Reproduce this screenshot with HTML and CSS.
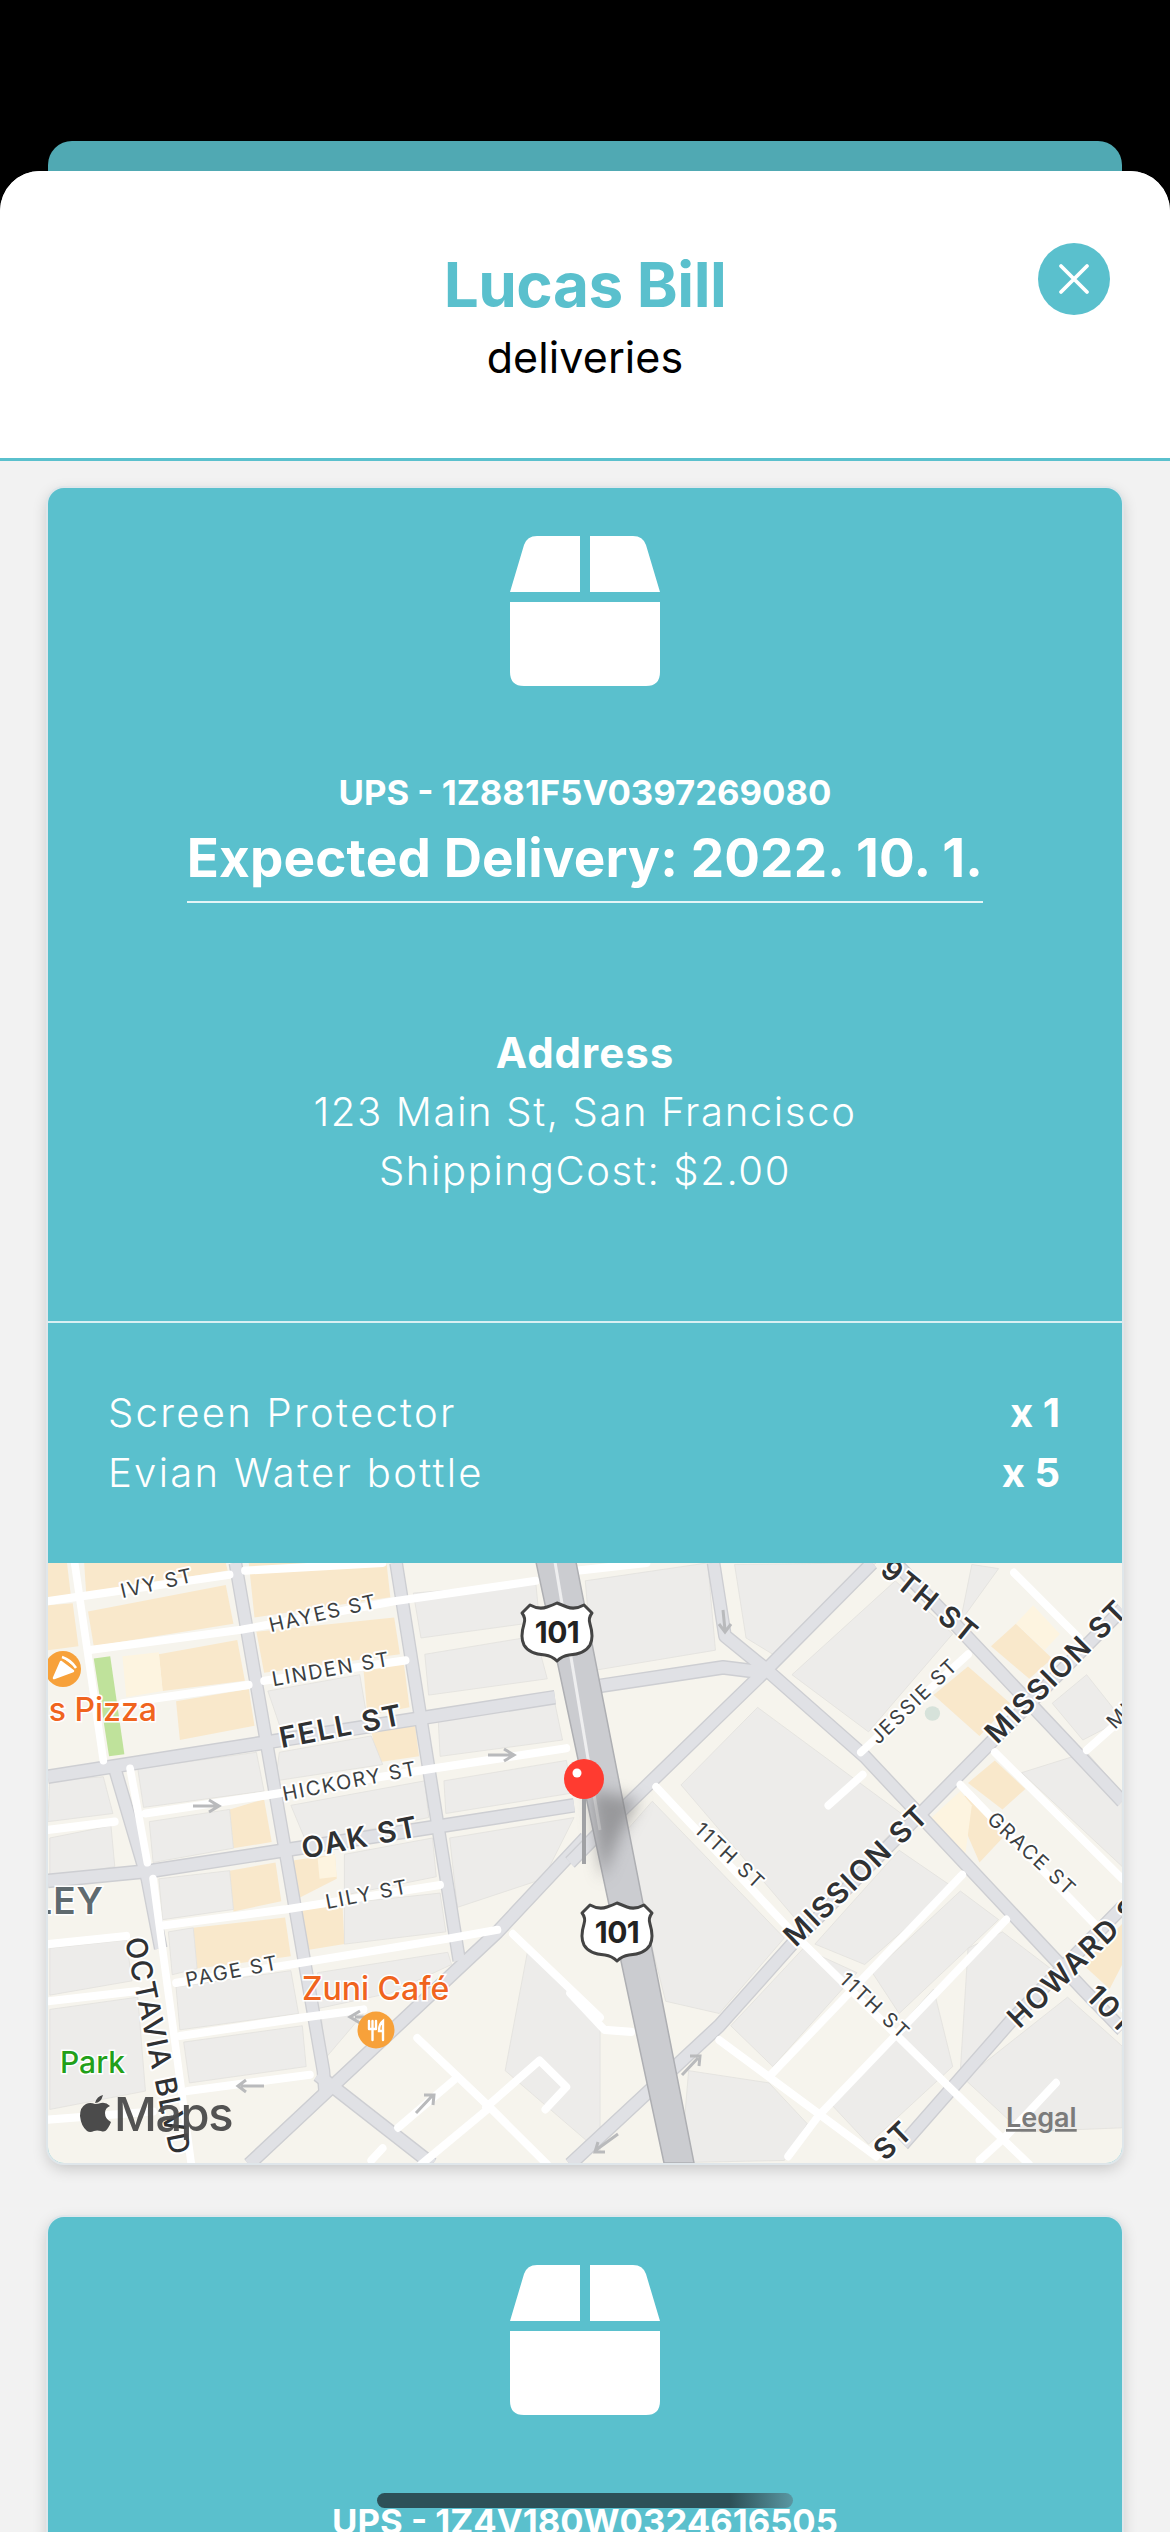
FILE: index.html
```html
<!DOCTYPE html>
<html lang="en">
<head>
<meta charset="utf-8">
<title>Lucas Bill deliveries</title>
<link rel="stylesheet" href="styles.css">
</head>
<body>
<div class="screen">
  <div class="backdrop"><div class="peek"></div></div>
  <main class="sheet">
    <header class="sheet-head">
      <h1 class="name">Lucas Bill</h1>
      <p class="sub">deliveries</p>
      <button class="close" aria-label="Close">
        <svg class="close-x" viewBox="0 0 36 36"><path d="M5 5 L31 31 M31 5 L5 31"/></svg>
      </button>
    </header>
    <div class="list">
      <article class="card">
        <section class="card-top">
          <svg class="box" viewBox="0 0 150 150"><path d="M0 56 L14 9 Q17 0 27 0 L70 0 L70 56 Z M80 0 L123 0 Q133 0 136 9 L150 56 L80 56 Z M0 66 H150 V136 Q150 150 136 150 H14 Q0 150 0 136 Z"/></svg>
          <p class="track">UPS - 1Z881F5V0397269080</p>
          <h2 class="expected">Expected Delivery: 2022. 10. 1.</h2>
          <p class="addr-title">Address</p>
          <p class="addr">123 Main St, San Francisco</p>
          <p class="addr">ShippingCost: $2.00</p>
        </section>
        <section class="items">
          <div class="item"><span>Screen Protector</span><b>x 1</b></div>
          <div class="item"><span>Evian Water bottle</span><b>x 5</b></div>
        </section>
        <svg class="map" viewBox="48 1563 1074 600">
          <defs>
            <g id="west-greys">
              <polyline points="615,56 845,1300 850,1360"/>
              <polyline points="1035,56 1200,1030"/>
              <polyline points="300,560 385,830 420,1000"/>
              <polyline points="125,580 700,495 1450,385"/>
              <polyline points="125,835 400,810 1500,650"/>
              <polyline points="650,1530 1300,960 1530,730"/>
              <polyline points="830,1310 1130,1530"/>
            </g>
            <g id="east-greys">
              <polyline points="375,56 405,235 510,315 770,530 1340,1100 1443,1200"/>
              <polyline points="850,56 1010,210 1443,640"/>
              <polyline points="60,360 400,312 510,325"/>
              <polyline points="0,790 115,680 500,330 790,56"/>
              <polyline points="1443,170 590,980 390,1190 0,1530"/>
              <polyline points="870,1480 1160,1170 1443,900"/>
            </g>
          </defs>
          <rect class="m-base" x="48" y="1563" width="1074" height="600"/>
          <!-- west half, drawn in crop coordinates -->
          <g transform="translate(0 1540) scale(.3827 .4082)">
            <g class="m-tan">
              <polygon points="125,160 190,155 205,260 125,270"/>
              <polygon points="230,175 590,110 610,205 245,260"/>
              <polygon points="125,56 175,56 185,135 125,145"/>
              <polygon points="220,56 590,56 595,75 225,130"/>
              <polygon points="650,56 1010,56 1020,140 665,190"/>
              <polygon points="670,225 1030,190 1045,280 690,325"/>
              <polygon points="415,280 620,245 640,345 425,370"/>
              <polygon points="460,395 650,365 665,455 470,490"/>
              <polygon points="950,320 1055,300 1070,410 960,430"/>
              <polygon points="970,465 1085,455 1095,530 985,545"/>
              <polygon points="600,660 690,635 710,740 610,755"/>
              <polygon points="600,810 720,790 735,885 610,910"/>
              <polygon points="505,950 745,925 760,1020 515,1050"/>
              <polygon points="765,785 875,770 880,830 775,880"/>
              <polygon points="790,905 895,895 900,990 800,1005"/>
            </g>
            <g class="m-pale">
              <polygon points="320,285 415,275 425,370 330,385"/>
              <polygon points="830,780 875,770 880,825 835,830"/>
            </g>
            <g class="m-bld">
              <polygon points="1110,280 1400,235 1430,340 1120,380"/>
              <polygon points="1080,130 1400,105 1410,200 1100,240"/>
              <polygon points="1145,440 1450,400 1470,490 1150,530"/>
              <polygon points="1160,590 1480,540 1495,620 1165,670"/>
              <polygon points="1175,730 1500,680 1420,830 1195,900"/>
              <polygon points="700,370 940,330 960,440 740,480"/>
              <polygon points="730,520 970,480 1000,550 720,590"/>
              <polygon points="360,560 670,520 690,615 375,655"/>
              <polygon points="760,650 1110,590 1120,680 800,740"/>
              <polygon points="390,690 600,660 610,755 400,790"/>
              <polygon points="900,770 1130,730 1140,825 900,870"/>
              <polygon points="415,830 600,810 610,905 425,930"/>
              <polygon points="900,890 1150,865 1165,960 900,990"/>
              <polygon points="440,960 505,950 515,1050 450,1065"/>
              <polygon points="130,590 270,580 295,670 125,690"/>
              <polygon points="130,730 290,700 300,800 130,830"/>
              <polygon points="460,1095 760,1055 780,1160 470,1200"/>
              <polygon points="480,1230 790,1190 800,1290 495,1330"/>
              <polygon points="130,1000 330,980 345,1080 130,1115"/>
              <polygon points="130,1150 360,1120 380,1350 130,1395"/>
              <polygon points="830,1060 1170,1010 1180,1040 1020,1110 820,1150"/>
              <polygon points="840,1170 950,1160 850,1270"/>
              <polygon points="1380,1000 1568,1180 1568,1500 1320,1300"/>
            </g>
            <polygon class="m-park" points="245,290 288,285 325,525 285,530"/>
            <use class="m-edge" href="#west-greys"/>
            <use class="m-grey" href="#west-greys"/>
            <g class="m-white">
              <polyline points="195,56 270,540"/>
              <polyline points="340,560 385,790"/>
              <polyline points="400,830 500,1530"/>
              <polyline points="125,150 600,85"/>
              <polyline points="640,75 1000,56"/>
              <polyline points="230,270 630,220 1030,150 1400,100"/>
              <polyline points="320,400 650,355"/>
              <polyline points="690,345 1060,295"/>
              <polyline points="380,670 700,625 1130,560 1480,510"/>
              <polyline points="420,945 745,905 1150,845"/>
              <polyline points="125,710 300,690"/>
              <polyline points="125,990 330,970"/>
              <polyline points="125,1130 360,1105"/>
              <polyline points="460,1085 760,1040 1180,975 1300,955"/>
              <polyline points="470,1215 790,1170 950,1150"/>
              <polyline points="490,1350 810,1310"/>
              <polyline points="125,1420 400,1400"/>
              <polyline points="1090,1220 1280,1390 1430,1530"/>
              <polyline points="1340,965 1568,1170"/>
              <polyline points="1040,1440 1190,1320"/>
              <polyline points="1270,1390 1410,1275 1480,1340 1425,1395"/>
              <polyline points="1100,1530 1280,1390"/>
              <polyline points="970,1520 1000,1490"/>
            </g>
          </g>
          <!-- east half, drawn in crop coordinates -->
          <g transform="translate(570 1540) scale(.3827 .4082)">
            <g class="m-bld">
              <polygon points="40,100 360,56 380,270 60,320"/>
              <polygon points="430,60 800,56 530,280 460,240"/>
              <polygon points="580,330 850,100 1000,230 780,470"/>
              <polygon points="290,600 490,410 880,680 600,940"/>
              <polygon points="140,720 215,640 560,975 390,1160 250,1130"/>
              <polygon points="640,990 860,760 1000,850 770,1040"/>
              <polygon points="420,1190 610,1000 750,1060 530,1290"/>
              <polygon points="790,1060 1020,860 1120,930 860,1160"/>
              <polygon points="1040,1000 1130,960 1270,1060 1020,1300"/>
              <polygon points="680,1380 950,1100 1000,1290 780,1480"/>
              <polygon points="1030,1320 1300,1120 1443,1240 1443,1440 1180,1450"/>
              <polygon points="310,1300 520,1330 620,1430 560,1520 290,1525"/>
              <polygon points="1180,570 1350,520 1443,620 1443,800"/>
              <polygon points="1260,400 1350,330 1443,440 1340,490"/>
              <polygon points="1050,60 1120,70 1020,200"/>
            </g>
            <g class="m-tan">
              <polygon points="950,380 1040,310 1150,400 1070,480"/>
              <polygon points="1100,260 1165,205 1260,290 1200,340"/>
              <polygon points="1005,650 1040,620 1130,730 1070,790"/>
              <polygon points="1040,595 1110,540 1190,610 1130,660"/>
              <polygon points="1340,1040 1443,940 1443,1040 1410,1100"/>
            </g>
            <g class="m-pale">
              <polygon points="945,680 1020,615 1050,650 1030,790"/>
              <polygon points="1165,205 1210,160 1280,230 1240,270"/>
            </g>
            <ellipse class="m-dot" cx="947" cy="425" rx="20" ry="18"/>
            <use class="m-edge" href="#east-greys"/>
            <use class="m-grey" href="#east-greys"/>
            <g class="m-white">
              <polyline points="225,605 590,970 980,1330 1200,1530"/>
              <polyline points="760,520 1040,280"/>
              <polyline points="675,650 765,575"/>
              <polyline points="1110,520 1443,830"/>
              <polyline points="1020,600 1380,950"/>
              <polyline points="1160,80 1330,240"/>
              <polyline points="1350,515 1440,440"/>
              <polyline points="525,1310 1025,820"/>
              <polyline points="650,1410 1140,930"/>
              <polyline points="390,1225 800,1510"/>
              <polyline points="570,1510 650,1410"/>
              <polyline points="0,1110 90,1200 160,1205"/>
              <polyline points="1140,1460 1270,1330"/>
              <polyline points="1070,1520 1140,1460"/>
              <polyline points="20,75 200,56"/>
            </g>
          </g>
          <polygon class="m-fwy" points="536,1562 576,1562 694,2163 664,2163"/>
          <line class="m-fwy-line" x1="555" y1="1562" x2="600" y2="1830"/>
          <!-- one-way arrows -->
          <g class="m-arrow">
            <path d="M488 1755 H512 M504 1749 L514 1755 L504 1761"/>
            <path d="M193 1806 H217 M209 1800 L219 1806 L209 1812"/>
            <path d="M355 2017 H378 M360 2011 L350 2017 L360 2023"/>
            <path d="M241 2086 H264 M246 2080 L238 2086 L246 2092"/>
            <path d="M723 1610 L725 1630 M719 1624 L725 1632 L731 1624"/>
            <path d="M682 2075 L698 2058 M690 2056 L700 2056 L699 2066"/>
            <path d="M618 2134 L596 2150 M598 2142 L595 2152 L605 2152"/>
            <path d="M416 2113 L432 2096 M424 2095 L434 2095 L433 2105"/>
          </g>
          <!-- street labels -->
          <text class="st" transform="translate(157 1583) rotate(-13)">IVY ST</text>
          <text class="st" transform="translate(323 1613) rotate(-13)">HAYES ST</text>
          <text class="st" transform="translate(331 1669) rotate(-10)">LINDEN ST</text>
          <text class="st-b" transform="translate(341 1726) rotate(-11)">FELL ST</text>
          <text class="st" transform="translate(350 1781) rotate(-11)">HICKORY ST</text>
          <text class="st-b" transform="translate(360 1837) rotate(-11)">OAK ST</text>
          <text class="st" transform="translate(367 1894) rotate(-11)">LILY ST</text>
          <text class="st" transform="translate(232 1971) rotate(-11)">PAGE ST</text>
          <text class="st-m" transform="translate(158 2046) rotate(78)">OCTAVIA BLVD</text>
          <text class="st-b" transform="translate(930 1601) rotate(39)">9TH ST</text>
          <text class="st-b" transform="translate(1056 1671) rotate(-45)">MISSION ST</text>
          <text class="st" transform="translate(914 1701) rotate(-44)">JESSIE ST</text>
          <text class="st" transform="translate(1032 1854) rotate(43)">GRACE ST</text>
          <text class="st" transform="translate(730 1856) rotate(43)">11TH ST</text>
          <text class="st" transform="translate(875 2006) rotate(43)">11TH ST</text>
          <text class="st-b" transform="translate(856 1875) rotate(-44)">MISSION ST</text>
          <text class="st-b st-start" transform="translate(1012 2022) rotate(-44)">HOWARD ST</text>
          <text class="st-b st-start" transform="translate(1092 1990) rotate(45)">10TH ST</text>
          <text class="st-b" transform="translate(893 2140) rotate(-44)">ST</text>
          <text class="st st-start" transform="translate(1110 1725) rotate(-45)">MISSION</text>
          <!-- POIs -->
          <text class="poi-o poi-end" x="157" y="1721">s Pizza</text>
          <circle class="poi-dot" cx="63" cy="1669" r="18"/>
          <path class="poi-slice" d="M54 1678 L61 1662 L73 1671 Z M62 1657 Q71 1660 76 1668"/>
          <text class="poi-o" x="302" y="2000">Zuni Café</text>
          <circle class="poi-dot" cx="376" cy="2030" r="18.5"/>
          <path class="poi-cut" d="M369 2021 V2029 M372.5 2021 V2040 M376 2021 V2029 M369 2029 H376 M383 2040 V2021 Q379 2024 379 2031 H383"/>
          <text class="poi-g" x="60" y="2073">Park</text>
          <text class="st-dist" x="104" y="1914">LEY</text>
          <!-- pin -->
          <g class="pin-shadow">
            <polygon points="590,1790 640,1800 620,1835 602,1880"/>
          </g>
          <line class="pin-stem" x1="584" y1="1790" x2="584" y2="1864"/>
          <circle class="pin" cx="584" cy="1779" r="20"/>
          <circle class="pin-hi" cx="577" cy="1773" r="4.5"/>
          <!-- shields -->
          <g transform="translate(557 1632)">
            <path class="shield" d="M-27 -27 Q-18 -22 -10 -25 Q-4 -27 0 -29 Q5 -27 10 -25 Q18 -22 27 -27 L35 -19 Q31 -14 33 -8 Q37 5 33 13 Q28 22 12 23 Q5 24 0 29 Q-5 24 -12 23 Q-28 22 -33 13 Q-37 5 -33 -8 Q-31 -14 -35 -19 Z"/>
            <text class="shield-t" y="11">101</text>
          </g>
          <g transform="translate(617 1932)">
            <path class="shield" d="M-27 -27 Q-18 -22 -10 -25 Q-4 -27 0 -29 Q5 -27 10 -25 Q18 -22 27 -27 L35 -19 Q31 -14 33 -8 Q37 5 33 13 Q28 22 12 23 Q5 24 0 29 Q-5 24 -12 23 Q-28 22 -33 13 Q-37 5 -33 -8 Q-31 -14 -35 -19 Z"/>
            <text class="shield-t" y="11">101</text>
          </g>
          <!-- attribution -->
          <path class="apple" d="M103 2095 Q97 2096 95 2103 Q101 2103 103 2095 Z M95 2104 Q90 2102 86 2104 Q80 2107 80 2116 Q81 2126 87 2131 Q90 2133 94 2131 Q97 2130 101 2131 Q105 2133 108 2128 Q110 2125 111 2122 Q105 2119 105 2113 Q105 2108 110 2106 Q106 2102 101 2103 Q98 2104 95 2104 Z"/>
          <text class="maps" x="114" y="2131">Maps</text>
          <text class="legal" x="1006" y="2127">Legal</text>
        </svg>
      </article>
      <article class="card">
        <section class="card-top">
          <svg class="box" viewBox="0 0 150 150"><path d="M0 56 L14 9 Q17 0 27 0 L70 0 L70 56 Z M80 0 L123 0 Q133 0 136 9 L150 56 L80 56 Z M0 66 H150 V136 Q150 150 136 150 H14 Q0 150 0 136 Z"/></svg>
          <p class="track">UPS - 1Z4V180W0324616505</p>
        </section>
      </article>
    </div>
  </main>
  <div class="home"></div>
</div>
</body>
</html>
```
FILE: styles.css
```css
* { box-sizing: border-box; margin: 0; padding: 0; }
html, body { height: 2532px; overflow: hidden; background: #000; }
body { font-family: "Inter", "Open Sans", sans-serif; color: #fff; }
.screen { position: relative; width: 1170px; height: 2532px; background: #000; overflow: hidden; }
.backdrop { padding: 141px 48px 0; height: 171px; }
.peek { height: 30px; background: #50a9b3; border-radius: 24px 24px 0 0; }
.sheet { position: relative; height: 2361px; background: #f2f2f2; border-radius: 40px 40px 0 0; overflow: hidden; }
.sheet-head { position: relative; height: 290px; padding-top: 74px; background: #fff; border-bottom: 3px solid #5ac0cd; text-align: center; }
.name { font-size: 62px; line-height: 80px; font-weight: 700; color: #5ac0cd; letter-spacing: -0.5px; }
.sub { margin-top: 2px; font-size: 43px; line-height: 60px; font-weight: 400; color: #000; letter-spacing: .1px; }
.close { position: absolute; top: 72px; right: 60px; width: 72px; height: 72px; border: 0; border-radius: 50%; background: #5ac0cd; display: flex; align-items: center; justify-content: center; }
.close-x { width: 36px; height: 36px; fill: none; stroke: #fff; stroke-width: 3.8; stroke-linecap: round; }
.list { padding: 27px 48px 0; display: flex; flex-direction: column; gap: 54px; }
.card { flex: none; background: #5ac0cd; border-radius: 16px; overflow: hidden; box-shadow: 0 0 0 2px #dfe6ea, 0 5px 16px rgba(0, 0, 0, .2); }
.card-top { padding: 48px 0 121px; display: flex; flex-direction: column; align-items: center; text-align: center; border-bottom: 2px solid #d9f0f3; }
.box { width: 150px; height: 150px; fill: #fff; }
.track { margin-top: 79px; font-size: 34.7px; line-height: 54px; font-weight: 700; }
.expected { padding-bottom: 4px; border-bottom: 2px solid #e4f5f7; font-size: 53px; line-height: 78px; font-weight: 700; letter-spacing: .15px; white-space: nowrap; }
.addr-title { margin-top: 120px; font-size: 42px; line-height: 59px; font-weight: 700; letter-spacing: 1px; }
.addr { font-size: 40px; line-height: 59px; font-weight: 300; letter-spacing: 1.65px; }
.items { padding: 60px 62px 60px 60px; }
.item { display: flex; justify-content: space-between; font-size: 40px; line-height: 60px; font-weight: 300; letter-spacing: 2.3px; }
.item b { font-weight: 700; letter-spacing: 0; }
.map { display: block; width: 1074px; height: 600px; font-family: "Inter", sans-serif; }
.m-base { fill: #f6f4ed; }
.m-tan polygon { fill: #f9e8cb; }
.m-pale polygon { fill: #fdf4e0; }
.m-bld polygon { fill: #edecea; stroke: #e2e1dd; stroke-width: 2; }
.m-park { fill: #bfe29b; }
.m-dot { fill: #d6e2da; }
.m-edge { fill: none; stroke: #cdced2; stroke-width: 36; stroke-linejoin: round; }
.m-grey { fill: none; stroke: #e0e1e5; stroke-width: 29; stroke-linejoin: round; }
.m-white polyline { fill: none; stroke: #fff; stroke-width: 20; stroke-linecap: round; stroke-linejoin: round; }
.m-fwy { fill: #cbccd0; stroke: #aeafb3; stroke-width: 1.5; }
.m-fwy-line { stroke: #eeeeef; stroke-width: 3; }
.m-arrow path { fill: none; stroke: #b9babc; stroke-width: 3; }
.st, .st-b, .st-m { fill: #3c3f42; stroke: #fff; stroke-width: 4px; paint-order: stroke; stroke-linejoin: round; text-anchor: middle; dominant-baseline: central; }
.st { font-size: 20px; font-weight: 400; letter-spacing: 1.7px; }
.st-b { font-size: 29px; font-weight: 600; letter-spacing: 1.8px; fill: #2f3133; }
.st-m { font-size: 29px; font-weight: 500; letter-spacing: 1px; fill: #2f3133; }
.st-start { text-anchor: start; }
.poi-o { font-size: 32px; font-weight: 500; fill: #f0641e; stroke: #fff; stroke-width: 3px; paint-order: stroke; }
.poi-end { text-anchor: end; }
.poi-g { font-size: 30px; font-weight: 500; fill: #22a019; stroke: #fff; stroke-width: 3px; paint-order: stroke; }
.poi-dot { fill: #f7a13a; }
.poi-slice { fill: #fff; stroke: #fff; stroke-width: 2.5; stroke-linejoin: round; }
.poi-cut { fill: none; stroke: #fff; stroke-width: 2.4; stroke-linecap: round; }
.st-dist { font-size: 37px; font-weight: 600; letter-spacing: 1px; fill: #5f6a6f; stroke: #fff; stroke-width: 3px; paint-order: stroke; text-anchor: end; }
.pin-shadow polygon { fill: #6e6e70; opacity: .55; filter: blur(8px); }
.pin-stem { stroke: #a0a1a4; stroke-width: 4; }
.pin { fill: #ff3b30; }
.pin-hi { fill: #fff; }
.shield { fill: #fff; stroke: #444; stroke-width: 3; stroke-linejoin: round; }
.shield-t { font-size: 30px; font-weight: 700; fill: #222; text-anchor: middle; letter-spacing: -.5px; }
.apple { fill: #4b4b4b; }
.maps { font-size: 47px; font-weight: 500; fill: #4b4b4b; letter-spacing: -1.5px; opacity: .95; }
.legal { font-size: 27px; font-weight: 600; fill: #7b7b7b; text-decoration: underline; }
.home { position: absolute; left: 377px; top: 2493px; width: 416px; height: 15px; border-radius: 8px; background: linear-gradient(to right, #2d5158 85%, #5a97a2); }
```
